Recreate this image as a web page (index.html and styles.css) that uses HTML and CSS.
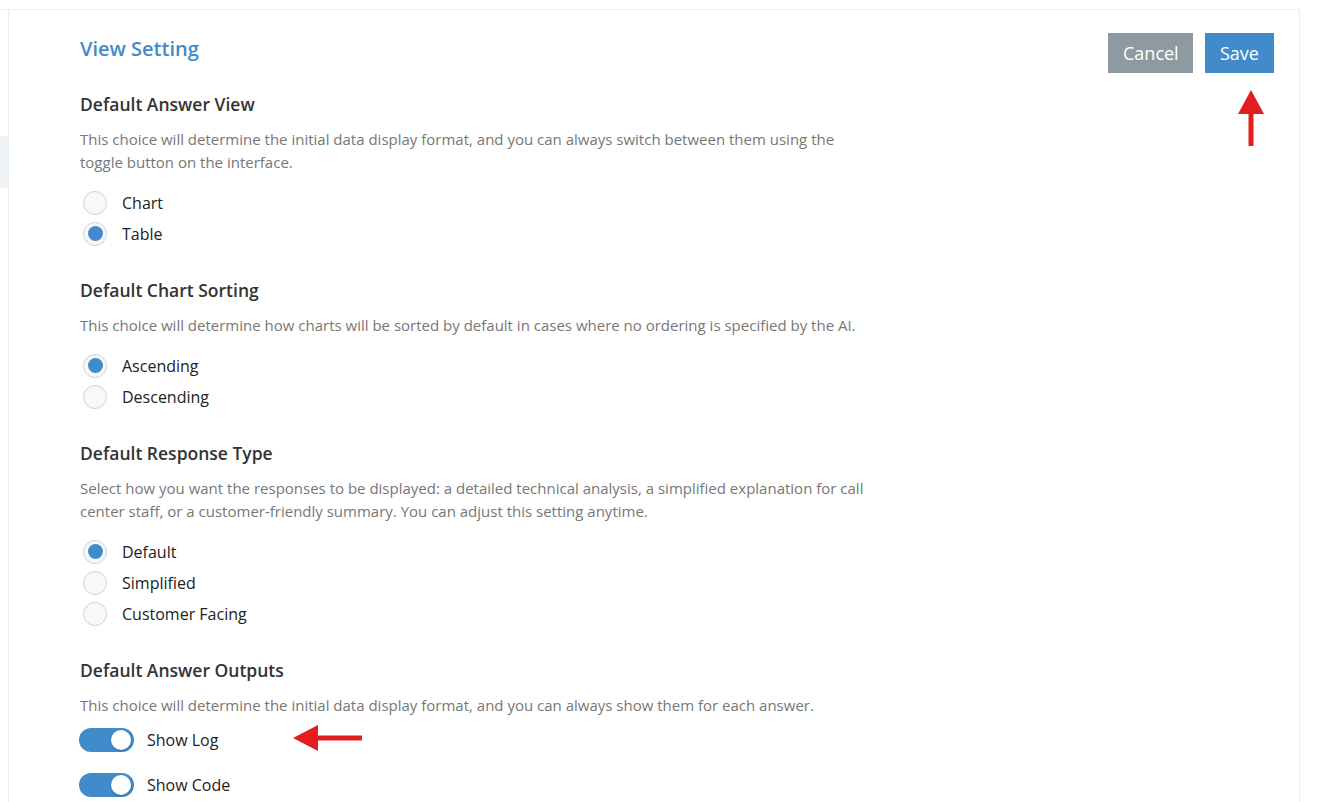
FILE: index.html
```html
<!DOCTYPE html>
<html lang="en">
<head>
<meta charset="utf-8">
<title>View Setting</title>
<link rel="stylesheet" href="styles.css">
</head>
<body>
<div class="page">
  <aside class="sidebar"><div class="sidebar-active"></div></aside>
  <main class="card">
    <header class="card-header">
      <h1 class="title">View Setting</h1>
      <div class="actions">
        <button class="btn btn-cancel">Cancel</button>
        <button class="btn btn-save">Save</button>
        <svg class="arrow-up" width="26" height="56" viewBox="0 0 26 56"><polygon points="13,0 26,24 0,24" fill="#e41e1e"/><rect x="10.5" y="23" width="5" height="33" fill="#e41e1e"/></svg>
      </div>
    </header>

    <section class="section">
      <h2 class="section-title">Default Answer View</h2>
      <p class="section-desc">This choice will determine the initial data display format, and you can always switch between them using the toggle button on the interface.</p>
      <div class="radio-group">
        <label class="radio"><span class="radio-dot"></span><span>Chart</span></label>
        <label class="radio"><span class="radio-dot checked"></span><span>Table</span></label>
      </div>
    </section>

    <section class="section">
      <h2 class="section-title">Default Chart Sorting</h2>
      <p class="section-desc">This choice will determine how charts will be sorted by default in cases where no ordering is specified by the AI.</p>
      <div class="radio-group">
        <label class="radio"><span class="radio-dot checked"></span><span>Ascending</span></label>
        <label class="radio"><span class="radio-dot"></span><span>Descending</span></label>
      </div>
    </section>

    <section class="section">
      <h2 class="section-title">Default Response Type</h2>
      <p class="section-desc">Select how you want the responses to be displayed: a detailed technical analysis, a simplified explanation for call center staff, or a customer-friendly summary. You can adjust this setting anytime.</p>
      <div class="radio-group">
        <label class="radio"><span class="radio-dot checked"></span><span>Default</span></label>
        <label class="radio"><span class="radio-dot"></span><span>Simplified</span></label>
        <label class="radio"><span class="radio-dot"></span><span>Customer Facing</span></label>
      </div>
    </section>

    <section class="section">
      <h2 class="section-title">Default Answer Outputs</h2>
      <p class="section-desc">This choice will determine the initial data display format, and you can always show them for each answer.</p>
      <div class="toggle-group">
        <label class="toggle-row"><span class="toggle on"><span class="knob"></span></span><span>Show Log</span>
          <svg class="arrow-left" width="69" height="26" viewBox="0 0 69 26"><polygon points="0,13 25,0 25,26" fill="#e41e1e"/><rect x="24" y="10.5" width="45" height="5" fill="#e41e1e"/></svg>
        </label>
        <label class="toggle-row"><span class="toggle on"><span class="knob"></span></span><span>Show Code</span></label>
      </div>
    </section>
  </main>
</div>
</body>
</html>
```

FILE: styles.css
```css
* { box-sizing: border-box; }
html, body { margin: 0; padding: 0; background: #fff; }
body {
  font-family: "Open Sans", "Liberation Sans", sans-serif;
  color: #333;
  overflow: hidden;
  height: 802px;
}
.page {
  display: flex;
  width: 1300px;
  margin-top: 9px;
  border-top: 1px solid #ececec;
  min-height: 793px;
}
.sidebar {
  width: 8px;
  flex: none;
  padding-top: 126px;
}
.sidebar-active {
  height: 52px;
  background: #eef3f7;
}
.card {
  flex: 1;
  border-left: 1px solid #ececec;
  border-right: 1px solid #ececec;
  padding: 23px 25px 0 71px;
}
.card-header {
  display: flex;
  justify-content: space-between;
  align-items: flex-start;
  margin-bottom: 19px;
}
.title {
  margin: 1px 0 0;
  font-size: 20px;
  font-weight: 600;
  line-height: 30px;
  color: #428bca;
}
.actions {
  display: flex;
  gap: 12px;
  position: relative;
}
.btn {
  height: 40px;
  border: none;
  border-radius: 0;
  font-family: inherit;
  font-size: 18px;
  color: #fff;
  padding: 0 15px;
  line-height: 40px;
}
.btn-cancel { background: #8e9aa2; width: 85px; }
.btn-save { background: #428bca; width: 69px; }
.arrow-up {
  position: absolute;
  left: 130px;
  top: 57px;
}
.section { margin-bottom: 29px; }
.section-title {
  margin: 0 0 12px;
  font-size: 17.5px;
  font-weight: 600;
  line-height: 24px;
  color: #333;
}
.section-desc {
  margin: 0 0 13px;
  max-width: 790px;
  font-size: 15px;
  line-height: 23px;
  color: #777;
}
.radio-group {
  display: flex;
  flex-direction: column;
}
.radio {
  display: flex;
  align-items: center;
  gap: 15px;
  height: 31px;
  padding-left: 3px;
  font-size: 16px;
  color: #222;
}
.radio-dot {
  width: 24px;
  height: 24px;
  border-radius: 50%;
  border: 1px solid #d2d2d2;
  background: #f8f8f8;
  display: flex;
  align-items: center;
  justify-content: center;
}
.radio-dot.checked::after {
  content: "";
  width: 15px;
  height: 15px;
  border-radius: 50%;
  background: #428bca;
}
.toggle-group {
  display: flex;
  flex-direction: column;
  gap: 21px;
  margin-top: -2px;
}
.toggle-row {
  display: flex;
  align-items: center;
  gap: 13px;
  font-size: 16px;
  color: #222;
  position: relative;
  height: 24px;
  margin-left: -1px;
}
.toggle {
  width: 55px;
  height: 24px;
  border-radius: 12px;
  background: #428bca;
  position: relative;
  flex: none;
}
.knob {
  position: absolute;
  right: 3px;
  top: 2px;
  width: 20px;
  height: 20px;
  border-radius: 50%;
  background: #fff;
  box-shadow: 0 1px 2px rgba(0,0,0,0.25);
}
.arrow-left {
  position: absolute;
  left: 214px;
  top: -3px;
}
```
